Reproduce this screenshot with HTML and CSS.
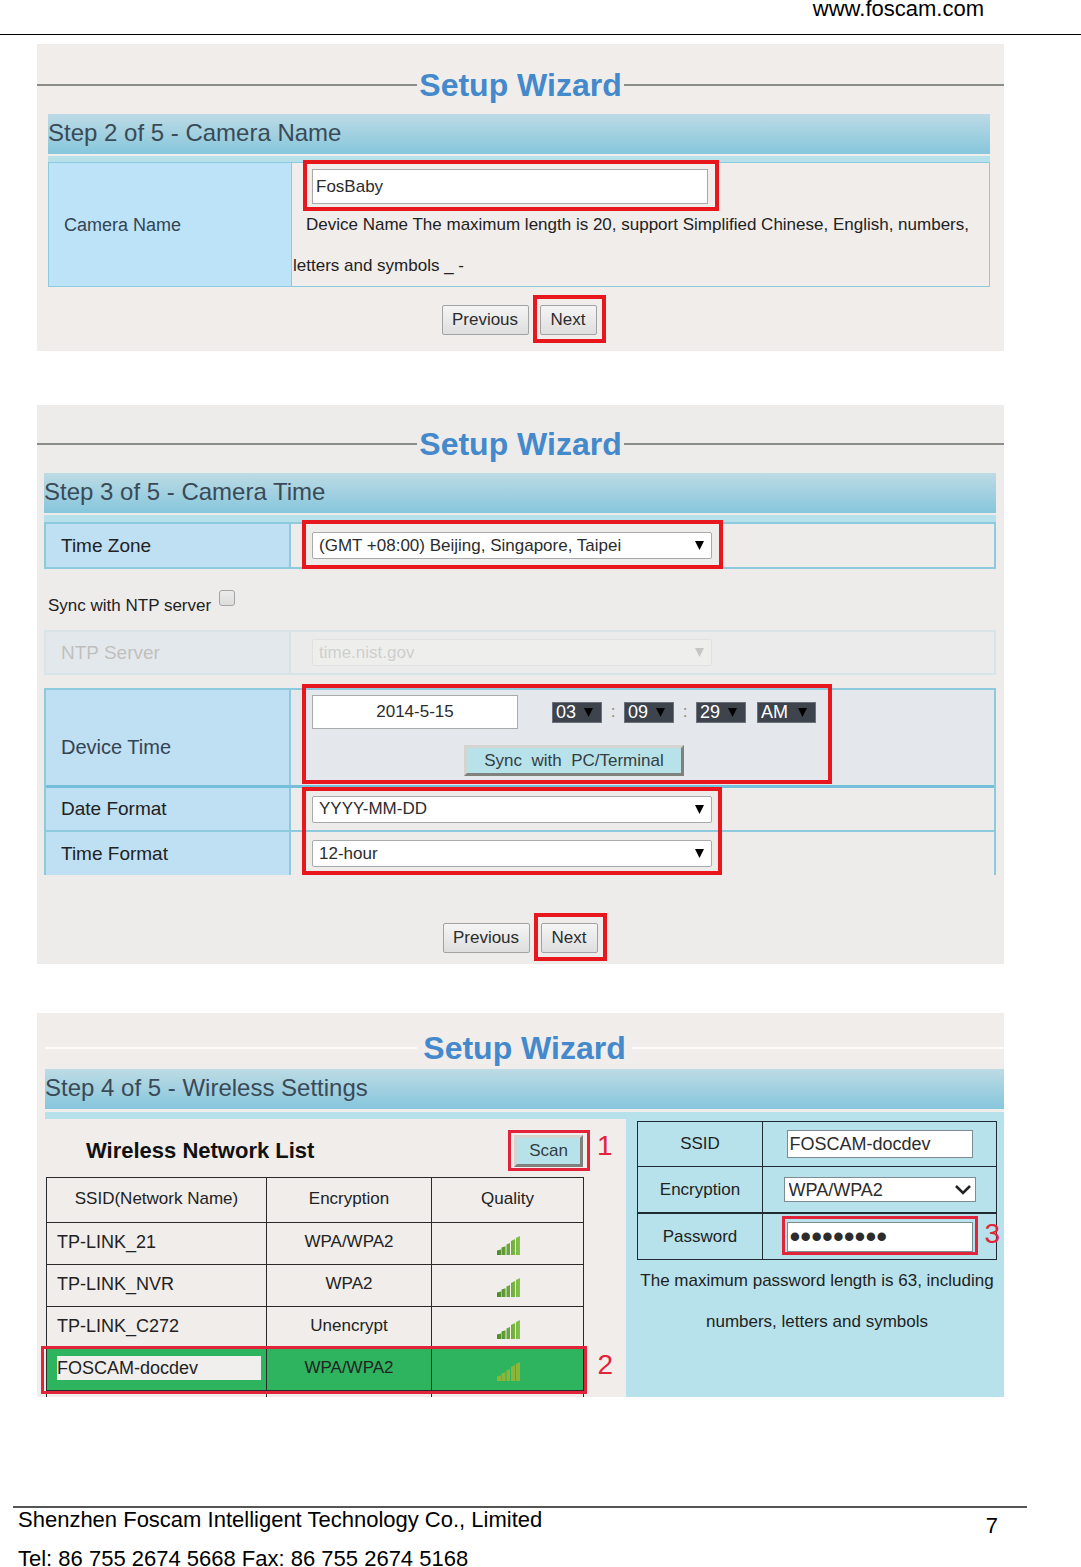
FILE: index.html
```html
<!DOCTYPE html>
<html lang="en">
<head>
<meta charset="utf-8">
<title>Foscam Setup Wizard guide, page 7</title>
<link rel="stylesheet" href="styles.css">
</head>
<body>
<svg class="defs" aria-hidden="true">
  <linearGradient id="bar" x1="0" x2="1" y1="0" y2="0">
    <stop offset="0" stop-color="#4c8a2a"/>
    <stop offset="1" stop-color="#86c24a"/>
  </linearGradient>
  <symbol id="signal" viewBox="0 0 24 20">
    <path d="M1 14.500l4-1V19H1zM5.500 11.500l4-1.200V19h-4zM10.500 8.500l3.500-1.500V19h-3.500zM15 5l4-2v16h-4zM20 2l4-2v19h-4z"/>
  </symbol>
</svg>

<header class="page-header"><a href="#">www.foscam.com</a></header>

<main>
  <section class="panel panel-name">
    <h2 class="title">Setup Wizard</h2>
    <h3 class="step">Step 2 of 5 - Camera Name</h3>
    <div class="strip"></div>
    <div class="rows rows-name">
      <div class="row">
        <label class="label" for="camera-name">Camera Name</label>
        <div class="name-cell">
          <div class="marked name-field">
            <input id="camera-name" class="field name-input" type="text" value="FosBaby">
            <span class="mark mark-name"></span>
          </div>
          <p class="note">Device Name The maximum length is 20, support Simplified Chinese, English, numbers, letters and symbols _ -</p>
        </div>
      </div>
    </div>
    <div class="actions">
      <button class="btn btn-prev" type="button">Previous</button>
      <span class="marked"><button class="btn btn-next" type="button">Next</button><span class="mark mark-next"></span></span>
    </div>
  </section>

  <section class="panel panel-time">
    <h2 class="title">Setup Wizard</h2>
    <h3 class="step">Step 3 of 5 - Camera Time</h3>
    <div class="strip"></div>
    <div class="rows">
      <div class="row">
        <label class="label" for="zone">Time Zone</label>
        <div class="control">
          <div class="marked">
            <select id="zone" class="field wide-select"><option>(GMT +08:00) Beijing, Singapore, Taipei</option></select>
            <span class="mark mark-zone"></span>
          </div>
        </div>
      </div>
    </div>
    <div class="sync-row">
      <label for="sync">Sync with NTP server</label>
      <input id="sync" class="check" type="checkbox">
    </div>
    <div class="rows rows-off">
      <div class="row">
        <label class="label" for="ntp">NTP Server</label>
        <div class="control">
          <select id="ntp" class="field wide-select" disabled><option>time.nist.gov</option></select>
        </div>
      </div>
    </div>
    <div class="rows rows-open">
      <div class="row row-device">
        <label class="label label-device" for="date">Device Time</label>
        <div class="device marked">
          <div class="clock">
            <input id="date" class="field date-input" type="text" value="2014-5-15">
            <select class="dark" aria-label="Hour"><option>03</option></select>
            <span class="colon">:</span>
            <select class="dark" aria-label="Minute"><option>09</option></select>
            <span class="colon">:</span>
            <select class="dark" aria-label="Second"><option>29</option></select>
            <select class="dark dark-half" aria-label="AM or PM"><option>AM</option></select>
          </div>
          <button class="raised sync-btn" type="button">Sync  with  PC/Terminal</button>
          <span class="mark mark-device"></span>
        </div>
      </div>
      <div class="marked">
        <div class="row row-date">
          <label class="label" for="date-format">Date Format</label>
          <div class="control"><select id="date-format" class="field wide-select"><option>YYYY-MM-DD</option></select></div>
        </div>
        <div class="row">
          <label class="label" for="time-format">Time Format</label>
          <div class="control"><select id="time-format" class="field wide-select"><option>12-hour</option></select></div>
        </div>
        <span class="mark mark-format"></span>
      </div>
    </div>
    <div class="actions actions-time">
      <button class="btn btn-prev" type="button">Previous</button>
      <span class="marked"><button class="btn btn-next" type="button">Next</button><span class="mark mark-next"></span></span>
    </div>
  </section>

  <section class="panel panel-wifi">
    <h2 class="title">Setup Wizard</h2>
    <h3 class="step">Step 4 of 5 - Wireless Settings</h3>
    <div class="wifi">
      <div class="networks">
        <div class="strip"></div>
        <div class="list-head">
          <h4>Wireless Network List</h4>
          <span class="marked"><button class="raised scan-btn" type="button">Scan</button><span class="mark mark-scan"></span><span class="callout">1</span></span>
        </div>
        <table class="list">
          <colgroup><col class="c-ssid"><col class="c-enc"><col></colgroup>
          <thead>
            <tr><th>SSID(Network Name)</th><th>Encryption</th><th>Quality</th></tr>
          </thead>
          <tbody>
            <tr><td>TP-LINK_21</td><td>WPA/WPA2</td><td><svg class="signal"><use href="#signal"/></svg></td></tr>
            <tr><td>TP-LINK_NVR</td><td>WPA2</td><td><svg class="signal"><use href="#signal"/></svg></td></tr>
            <tr><td>TP-LINK_C272</td><td>Unencrypt</td><td><svg class="signal"><use href="#signal"/></svg></td></tr>
            <tr class="picked"><td><span class="picked-name">FOSCAM-docdev</span></td><td>WPA/WPA2</td><td><svg class="signal"><use href="#signal"/></svg><span class="mark mark-row"></span><span class="callout">2</span></td></tr>
            <tr class="cut"><td></td><td></td><td></td></tr>
          </tbody>
        </table>
      </div>
      <div class="join">
        <div class="join-rows">
          <div class="join-row">
            <label for="ssid">SSID</label>
            <div><input id="ssid" class="join-input" type="text" value="FOSCAM-docdev"></div>
          </div>
          <div class="join-row">
            <label for="enc">Encryption</label>
            <div><select id="enc" class="join-select"><option>WPA/WPA2</option></select></div>
          </div>
          <div class="join-row join-pass">
            <label for="pass">Password</label>
            <div><span class="marked"><input id="pass" class="join-input pass-input" type="password" value="docdev123"><span class="mark mark-pass"></span><span class="callout">3</span></span></div>
          </div>
        </div>
        <p class="hint">The maximum password length is 63, including numbers, letters and symbols</p>
      </div>
    </div>
  </section>
</main>

<footer class="page-footer">
  <div>
    <p class="company">Shenzhen Foscam Intelligent Technology Co., Limited</p>
    <p class="phone">Tel: 86 755 2674 5668 Fax: 86 755 2674 5168</p>
  </div>
  <span class="page-no">7</span>
</footer>
</body>
</html>
```
FILE: styles.css
```css
* { box-sizing: border-box; }

body {
  margin: 0;
  background: #fff;
  color: #222;
  font: 17px/24px "Liberation Sans", Arial, sans-serif;
}

h2, h3, h4, p { margin: 0; font-weight: normal; }

input, select, button { margin: 0; font: inherit; color: #2c2c2c; }

.defs { position: absolute; width: 0; height: 0; }

/* Page header */
.page-header {
  padding: 0 97px 16px 0;
  border-bottom: 1px solid #000;
  text-align: right;
  font-size: 22px;
  line-height: 18px;
}
.page-header a { color: #000; text-decoration: none; }

main { padding: 9px 77px 0 37px; }

/* Wizard panels */
.panel { background: #edecea; }
.panel-name { padding: 12px 14px 16px 11px; background: #f0edeb; }
.panel-time { margin-top: 54px; padding: 10px 8px 11px 7px; }
.panel-wifi { margin-top: 49px; padding: 14px 0 0 8px; background: #f0edeb; }

.title {
  display: flex;
  align-items: center;
  gap: 2px;
  color: #4389cb;
  font-size: 32px;
  font-weight: bold;
  line-height: 58px;
}
.title::before, .title::after {
  content: "";
  flex: 1;
  height: 2px;
  background: #8b8d89;
}
.panel-name .title { margin: 0 -14px 0 -11px; }
.panel-time .title { margin: 0 -8px 0 -7px; }
.panel-wifi .title { gap: 6px; line-height: 42px; }
.panel-wifi .title::before, .panel-wifi .title::after { background: #fcfbfa; }

.step {
  height: 40px;
  background: linear-gradient(#bddbe5, #86c6dc);
  color: #3a4a56;
  font-size: 24px;
  line-height: 38px;
}
.strip { height: 6px; margin-top: 2px; background: #b7e1ea; }
.panel-time .strip { height: 7px; }

/* Label and control rows */
.rows { border: 2px solid #8ecade; }
.row { display: grid; grid-template-columns: 245px 1fr; min-height: 43px; }
.label {
  display: flex;
  align-items: center;
  padding-left: 15px;
  border-right: 2px solid #8ecade;
  background: #bfdff2;
  font-size: 19px;
}
.control { display: flex; align-items: center; padding-left: 21px; }
.field { border: 1px solid #a9abab; background: #fff; }

.rows-name, .rows-name .label { border-width: 1px; }
.rows-name .row { grid-template-columns: 243px 1fr; }
.rows-name .label { background: #bde3f8; color: #344452; font-size: 18px; }
.name-cell { padding: 6px 0 0 1px; }
.name-field { margin-left: 19px; width: 396px; }
.name-input { display: block; width: 100%; height: 35px; padding: 0 3px; }
.note { text-indent: 13px; line-height: 41px; }

.wide-select {
  width: 400px;
  height: 27px;
  padding: 0 6px;
  border-radius: 2px;
  appearance: none;
  background: #fff url("data:image/svg+xml,%3Csvg xmlns='http://www.w3.org/2000/svg' width='9' height='9'%3E%3Cpath d='M0 0h9L4.500 9z'/%3E%3C/svg%3E") no-repeat right 7px center;
}

.sync-row {
  display: flex;
  align-items: center;
  gap: 8px;
  height: 61px;
  padding: 13px 0 0 4px;
}
.check {
  width: 16px;
  height: 16px;
  margin-bottom: 16px;
  appearance: none;
  border: 1px solid #a4a4a4;
  border-radius: 3px;
  background: linear-gradient(#ebebeb, #dcdcdc);
}

.rows-off { opacity: 0.22; }
.rows-off .row { min-height: 41px; }
.rows-off .label { background: #c4dcf4; }
.rows-off .control { background: #e0eaee; }

.rows-open { margin-top: 13px; border-bottom: 0; }
.row-device { border-bottom: 3px solid #74c0da; background: #e4e8ec; }
.row-date { min-height: 44px; border-bottom: 2px solid #8ecade; }
.label-device { padding-top: 19px; color: #344452; font-size: 20px; }
.device { padding: 5px 0 9px 21px; }
.clock { display: flex; align-items: center; }
.date-input { width: 206px; height: 34px; margin-right: 34px; text-align: center; }
.dark {
  width: 50px;
  height: 21px;
  padding: 0 3px;
  appearance: none;
  border: 1px solid #6d7278;
  border-radius: 0;
  color: #fff;
  font-size: 18px;
  line-height: 19px;
  background: #3e444d url("data:image/svg+xml,%3Csvg xmlns='http://www.w3.org/2000/svg' width='9' height='9'%3E%3Cpath d='M0 0h9L4.500 9z'/%3E%3C/svg%3E") no-repeat right 8px center;
}
.dark-half { width: 59px; margin-left: 11px; }
.colon { width: 22px; text-align: center; color: #8a8a80; }

.raised {
  border: 3px outset #d4d4d0;
  background: #b8e2ea;
  color: #333d42;
  white-space: pre;
}
.sync-btn { display: block; width: 220px; height: 31px; margin: 16px 0 0 152px; padding: 0; }

.actions { display: flex; justify-content: center; gap: 11px; padding-top: 18px; }
.actions-time { padding-top: 48px; }
.btn {
  height: 30px;
  padding: 0;
  border: 1px solid #a2a2a2;
  border-radius: 2px;
  background: linear-gradient(#f5f5f5, #dedede);
}
.btn-prev { width: 87px; }
.btn-next { display: block; width: 57px; }

/* Red annotation frames and numbers, laid over the controls */
.marked { position: relative; }
.mark { position: absolute; border: 4px solid #e8161d; pointer-events: none; }
.mark-name { inset: -9px -11px -7px -9px; }
.mark-next { inset: -10px -9px -8px -7px; }
.mark-zone { inset: -12px -11px -10px -10px; }
.mark-device { top: -6px; bottom: 1px; left: 11px; width: 530px; }
.mark-format { top: -1px; bottom: 0; left: 256px; width: 420px; }
.mark-scan, .mark-row, .mark-pass { border: 3px solid #e2243a; }
.mark-scan { inset: -5px -7px -4px -6px; }
.mark-row { inset: -3px -3px -3px -6px; }
.mark-pass { inset: -6px -5px -3px -5px; }
.callout {
  position: absolute;
  top: 50%;
  left: 100%;
  margin: -19px 0 0 14px;
  color: #e2243a;
  font-size: 28px;
  line-height: 28px;
}
.join .callout { margin: -17px 0 0 12px; }

/* Wireless settings */
.wifi { display: grid; grid-template-columns: 1fr 378px; margin-top: 3px; }
.networks .strip { height: 7px; margin: 0; }
.list-head {
  display: flex;
  align-items: center;
  justify-content: space-between;
  height: 58px;
  padding: 6px 43px 0 41px;
}
.list-head h4 { color: #111; font-size: 22px; font-weight: bold; }
.scan-btn { display: block; width: 69px; height: 32px; padding: 0; }

.list {
  width: calc(100% - 43px);
  margin-left: 1px;
  border-collapse: collapse;
  table-layout: fixed;
}
.c-ssid { width: 220px; }
.c-enc { width: 165px; }
.list th, .list td {
  height: 42px;
  padding: 0 0 3px;
  border: 1px solid #2a2a2a;
  border-bottom: 0;
  font-weight: normal;
  text-align: center;
}
.list th { height: 45px; }
.list td:first-child { padding: 0 5px 3px 10px; font-size: 18px; text-align: left; }
.signal { display: block; width: 24px; height: 20px; margin: 8px auto 0; fill: url(#bar); }
.picked { position: relative; background: #2eb45f; }
.picked .signal { fill: #8cb53a; }
.picked-name { display: block; background: #f0efed; }
.list .cut td { height: 6px; }

.join { padding: 9px 7px 0 11px; background: #b7e2eb; }
.join-rows { border: 1px solid #1f2b30; }
.join-row {
  display: grid;
  grid-template-columns: 125px 1fr;
  height: 45px;
  border-bottom: 1px solid #1f2b30;
}
.join-row:nth-child(2) { height: 47px; border-bottom-width: 2px; }
.join-row:last-child { border-bottom: 0; }
.join-row label {
  display: flex;
  align-items: center;
  justify-content: center;
  border-right: 1px solid #1f2b30;
}
.join-row > div { display: flex; align-items: center; justify-content: center; }
.join-input, .join-select {
  display: block;
  width: 186px;
  height: 28px;
  padding: 0 2px;
  border: 1px solid #7d8c90;
  background: #fff;
  font-size: 18px;
}
.join-select {
  width: 192px;
  height: 25px;
  padding: 0 4px;
  border-radius: 0;
  appearance: none;
  background: #fff url("data:image/svg+xml,%3Csvg xmlns='http://www.w3.org/2000/svg' width='16' height='10'%3E%3Cpath d='M1 1l7 7 7-7' fill='none' stroke='%23222' stroke-width='2.500'/%3E%3C/svg%3E") no-repeat right 4px center;
}
.pass-input { height: 30px; font-size: 31px; line-height: 28px; }
.hint { margin: 0 -11px; line-height: 41px; text-align: center; padding: 0 4px; }

/* Page footer */
.page-footer {
  display: flex;
  justify-content: space-between;
  margin: 109px 54px 0 13px;
  padding: 0 29px 1px 5px;
  border-top: 2px solid #555;
  overflow: hidden;
  color: #000;
  font-size: 22px;
}
.phone { margin-top: 19px; line-height: 16px; }
.page-no { padding-top: 6px; }
```
